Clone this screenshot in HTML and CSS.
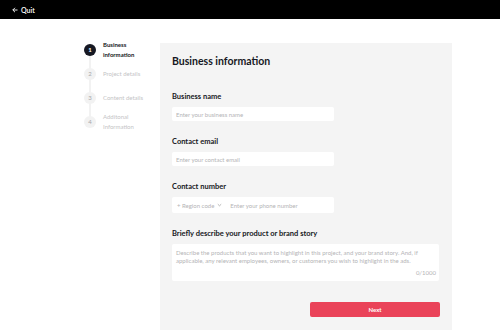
FILE: index.html
```html
<!DOCTYPE html>
<html lang="en">
<head>
  <meta charset="UTF-8" />
  <title>Business information</title>
  <link rel="stylesheet" href="styles.css">
</head>
<body>
  <header class="topbar">
    <a class="quit" href="#">
      <svg width="6" height="6" viewBox="0 0 6 6"><path d="M5.5 3H0.8M3 0.8L0.8 3L3 5.2" fill="none" stroke="#fff" stroke-width="0.9"/></svg>
      Quit
    </a>
  </header>

  <main class="layout">
    <ol class="steps">
      <li class="step active"><span class="dot">1</span><span class="step-name">Business<br>information</span></li>
      <li class="step"><span class="dot">2</span><span class="step-name">Project details</span></li>
      <li class="step"><span class="dot">3</span><span class="step-name">Content details</span></li>
      <li class="step"><span class="dot">4</span><span class="step-name">Additonal<br>Information</span></li>
    </ol>

    <section class="panel">
      <h1>Business information</h1>

      <div class="field first">
        <label>Business name</label>
        <input class="input" type="text" placeholder="Enter your business name">
      </div>

      <div class="field">
        <label>Contact email</label>
        <input class="input" type="text" placeholder="Enter your contact email">
      </div>

      <div class="field">
        <label>Contact number</label>
        <div class="phone">
          <span class="region">+ Region code
            <svg width="5" height="4" viewBox="0 0 5 4"><path d="M0.8 1.2L2.5 2.8L4.2 1.2" fill="none" stroke="#999" stroke-width="0.7"/></svg>
          </span>
          <input type="text" placeholder="Enter your phone number">
        </div>
      </div>

      <div class="field">
        <label>Briefly describe your product or brand story</label>
        <div class="story">
          <textarea placeholder="Describe the products that you want to highlight in this project, and your brand story. And, if applicable, any relevant employees, owners, or customers you wish to highlight in the ads."></textarea>
          <span class="count">0/1000</span>
        </div>
      </div>

      <div class="actions">
        <button class="next">Next</button>
      </div>
    </section>
  </main>
</body>
</html>
```

FILE: styles.css
```css
* { box-sizing: border-box; margin: 0; padding: 0; }
body {
  font-family: 'Lato', 'Noto Sans', sans-serif;
  background: #fff;
  color: #161823;
}
.topbar {
  background: #000;
  height: 19px;
  display: flex;
  align-items: center;
  padding-left: 12px;
}
.quit {
  color: #fff;
  text-decoration: none;
  font-size: 7px;
  font-weight: 600;
  display: flex;
  align-items: center;
  gap: 3px;
}
.layout {
  display: flex;
  padding: 24px 0 0 84px;
}
.steps {
  list-style: none;
  width: 76px;
  margin-top: -5px;
}
.step {
  display: flex;
  align-items: center;
  gap: 7px;
  height: 24px;
  position: relative;
  font-size: 6px;
  line-height: 10px;
  color: #c4c4c6;
}
.step:not(:last-child)::after {
  content: "";
  position: absolute;
  left: 5px;
  top: 17px;
  width: 2px;
  height: 14px;
  background: #f2f2f2;
}
.dot {
  width: 12px;
  height: 12px;
  border-radius: 50%;
  background: #f2f2f2;
  color: #a8a8ab;
  font-size: 6px;
  display: flex;
  align-items: center;
  justify-content: center;
  flex-shrink: 0;
  position: relative;
  z-index: 1;
}
.step.active { color: #161823; font-weight: 700; }
.step.active .dot { background: #161823; color: #fff; }
.panel {
  background: #f4f4f4;
  width: 292px;
  height: 287px;
  padding: 11px 12px 0;
}
.panel h1 {
  font-size: 10.5px;
  font-weight: 700;
  line-height: 14px;
}
.field { margin-top: 16px; }
.field.first { margin-top: 24px; }
.field label {
  display: block;
  font-size: 7.5px;
  font-weight: 700;
  line-height: 10px;
  margin-bottom: 5px;
}
.input, .phone input, textarea {
  font-family: inherit;
  font-size: 6px;
  border: none;
  outline: none;
  color: #161823;
}
.input::placeholder, .phone input::placeholder, textarea::placeholder { color: #b4b4b6; }
.input {
  display: block;
  width: 162px;
  height: 14px;
  background: #fff;
  border-radius: 2px;
  padding: 0 4px;
}
.phone {
  display: flex;
  align-items: center;
  width: 162px;
  height: 16px;
  background: #fff;
  border-radius: 2px;
  padding-left: 5px;
}
.region {
  font-size: 6px;
  color: #b4b4b6;
  display: flex;
  align-items: center;
  gap: 3px;
  margin-right: 8px;
}
.phone input {
  flex: 1;
  background: none;
  min-width: 0;
}
.story {
  position: relative;
  width: 267px;
  height: 37px;
  background: #fff;
  border-radius: 2px;
}
textarea {
  display: block;
  width: 100%;
  height: 100%;
  resize: none;
  background: none;
  padding: 5px 4px;
  line-height: 8px;
}
.count {
  position: absolute;
  right: 3px;
  bottom: 5px;
  font-size: 6px;
  color: #b4b4b6;
}
.actions {
  display: flex;
  justify-content: flex-end;
  margin-top: 21px;
}
.next {
  width: 130px;
  height: 15px;
  background: #ea4359;
  color: #fff;
  border: none;
  border-radius: 2px;
  font-family: inherit;
  font-size: 6px;
  font-weight: 700;
}
```
